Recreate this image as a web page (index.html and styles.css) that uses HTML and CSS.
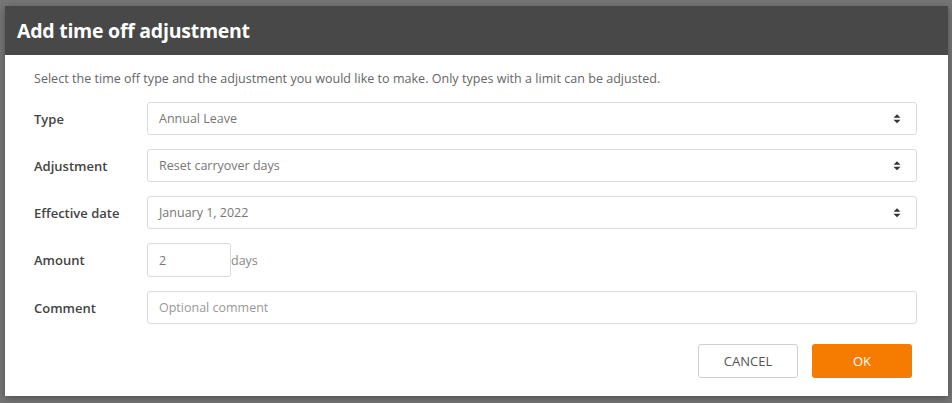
FILE: index.html
```html
<!DOCTYPE html>
<html lang="en">
<head>
<meta charset="utf-8">
<title>Add time off adjustment</title>
<link rel="stylesheet" href="styles.css">
</head>
<body>
<div class="backdrop">
  <div class="modal">
    <div class="modal-header">
      <h1 class="modal-title">Add time off adjustment</h1>
    </div>
    <div class="modal-body">
      <p class="intro">Select the time off type and the adjustment you would like to make. Only types with a limit can be adjusted.</p>
      <div class="form">
        <label class="label">Type</label>
        <div class="select"><span class="value">Annual Leave</span><svg class="arrows" width="8" height="10" viewBox="0 0 8 10"><path d="M0.5 3.8 L4 0.3 L7.5 3.8 Z M0.5 5.8 L4 9.3 L7.5 5.8 Z" fill="#333"/></svg></div>

        <label class="label">Adjustment</label>
        <div class="select"><span class="value">Reset carryover days</span><svg class="arrows" width="8" height="10" viewBox="0 0 8 10"><path d="M0.5 3.8 L4 0.3 L7.5 3.8 Z M0.5 5.8 L4 9.3 L7.5 5.8 Z" fill="#333"/></svg></div>

        <label class="label">Effective date</label>
        <div class="select"><span class="value">January 1, 2022</span><svg class="arrows" width="8" height="10" viewBox="0 0 8 10"><path d="M0.5 3.8 L4 0.3 L7.5 3.8 Z M0.5 5.8 L4 9.3 L7.5 5.8 Z" fill="#333"/></svg></div>

        <label class="label">Amount</label>
        <div class="amount-row"><div class="input amount"><span class="value">2</span></div><span class="unit">days</span></div>

        <label class="label">Comment</label>
        <div class="input comment"><span class="placeholder">Optional comment</span></div>
      </div>
    </div>
    <div class="modal-footer">
      <button class="btn btn-cancel">CANCEL</button>
      <button class="btn btn-ok">OK</button>
    </div>
  </div>
</div>
</body>
</html>
```

FILE: styles.css
```css
html, body {
  margin: 0;
  padding: 0;
}
body {
  background: #767676;
  font-family: "Open Sans", "Noto Sans", sans-serif;
  width: 952px;
  height: 403px;
  overflow: hidden;
}
.backdrop {
  padding: 6px 4px 0 5px;
}
.modal {
  width: 943px;
  height: 390px;
  background: #fff;
  box-shadow: 0 2px 8px rgba(0, 0, 0, 0.35);
  display: flex;
  flex-direction: column;
}
.modal-header {
  height: 49px;
  background: #484848;
  padding: 0 12px;
  display: flex;
  align-items: center;
}
.modal-title {
  margin: 0;
  color: #fff;
  font-size: 19.5px;
  font-weight: 700;
  letter-spacing: -0.25px;
}
.modal-body {
  padding: 15px 31px 0 29px;
}
.intro {
  margin: 0 0 14px;
  font-size: 12.5px;
  line-height: 18px;
  color: #666;
  letter-spacing: 0.03px;
}
.form {
  display: grid;
  grid-template-columns: 113px 1fr;
  row-gap: 14px;
  align-items: center;
}
.label {
  font-size: 13px;
  font-weight: 600;
  color: #444;
}
.select, .input {
  box-sizing: border-box;
  height: 33px;
  border: 1px solid #dcdcdc;
  border-radius: 3px;
  display: flex;
  align-items: center;
  padding: 0 11px;
  font-size: 12.5px;
  color: #777;
}
.select {
  justify-content: space-between;
}
.arrows {
  display: block;
  margin-right: 4px;
}
.amount-row {
  display: flex;
  align-items: center;
}
.amount {
  width: 84px;
  height: 34px;
}
.unit {
  font-size: 12.5px;
  color: #888;
}
.placeholder {
  color: #999;
}
.modal-footer {
  margin-top: auto;
  padding: 0 36px 18px 0;
  display: flex;
  justify-content: flex-end;
  gap: 14px;
}
.btn {
  box-sizing: border-box;
  width: 100px;
  height: 34px;
  border-radius: 3px;
  font-family: "Open Sans", "Noto Sans", sans-serif;
  font-size: 13px;
  padding: 0;
}
.btn-cancel {
  background: #fff;
  border: 1px solid #cfcfcf;
  color: #555;
}
.btn-ok {
  background: #f57c00;
  border: none;
  color: #fff;
}
```
